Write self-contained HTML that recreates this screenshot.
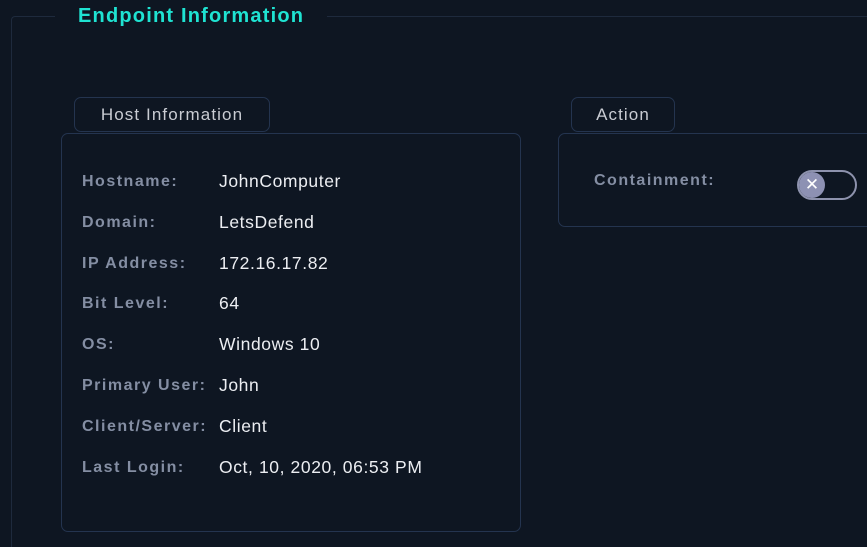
<!DOCTYPE html>
<html><head><style>
html,body{margin:0;width:867px;height:547px;overflow:hidden}
body{background:#0e1622;font-family:"Liberation Sans",sans-serif;position:relative}
.a{position:absolute;box-sizing:border-box;white-space:nowrap}
.outer{left:11px;top:16px;width:856px;height:531px;border:1px solid #1e2a3d;border-right:none;border-bottom:none;border-radius:4px 0 0 0}
.gap{left:55px;top:10px;width:272px;height:12px;background:#0e1622}
.title{left:78px;top:5px;font-size:20px;font-weight:bold;color:#1fe3d2;letter-spacing:1.2px}
.tab{border:1px solid #24344f;border-radius:7px;background:#0e1622;color:#c9ccd3;font-size:17px;text-align:center;line-height:33px;letter-spacing:1.1px}
.box{border:1px solid #24344f;border-radius:7px}
.lab{left:82px;font-size:16px;font-weight:bold;color:#848ea3;letter-spacing:1.5px}
.val{left:219px;font-size:17.5px;color:#eceef2;letter-spacing:0.6px}
</style></head><body>
<div class="a outer"></div>
<div class="a gap"></div>
<div class="a title">Endpoint Information</div>
<div class="a box" style="left:61px;top:133px;width:460px;height:399px"></div>
<div class="a tab" style="left:74px;top:97px;width:196px;height:35px">Host Information</div>
<div class="a box" style="left:558px;top:133px;width:330px;height:94px"></div>
<div class="a tab" style="left:571px;top:97px;width:104px;height:35px">Action</div>
<div class="a lab" style="left:594px;top:172px">Containment:</div>
<div class="a" style="left:797px;top:170px;width:60px;height:30px;border:2px solid #8d92ad;border-radius:15px"></div>
<div class="a" style="left:799px;top:172px;width:26px;height:26px;border-radius:13px;background:#8d91b3;color:#fff;font-size:17px;text-align:center;line-height:25px">✕</div>
<div class="a lab" style="top:173px">Hostname:</div><div class="a val" style="top:171px">JohnComputer</div>
<div class="a lab" style="top:214px">Domain:</div><div class="a val" style="top:212px">LetsDefend</div>
<div class="a lab" style="top:255px">IP Address:</div><div class="a val" style="top:253px">172.16.17.82</div>
<div class="a lab" style="top:295px">Bit Level:</div><div class="a val" style="top:293px">64</div>
<div class="a lab" style="top:336px">OS:</div><div class="a val" style="top:334px">Windows 10</div>
<div class="a lab" style="top:377px">Primary User:</div><div class="a val" style="top:375px">John</div>
<div class="a lab" style="top:418px">Client/Server:</div><div class="a val" style="top:416px">Client</div>
<div class="a lab" style="top:459px">Last Login:</div><div class="a val" style="top:457px">Oct, 10, 2020, 06:53 PM</div>
</body></html>
